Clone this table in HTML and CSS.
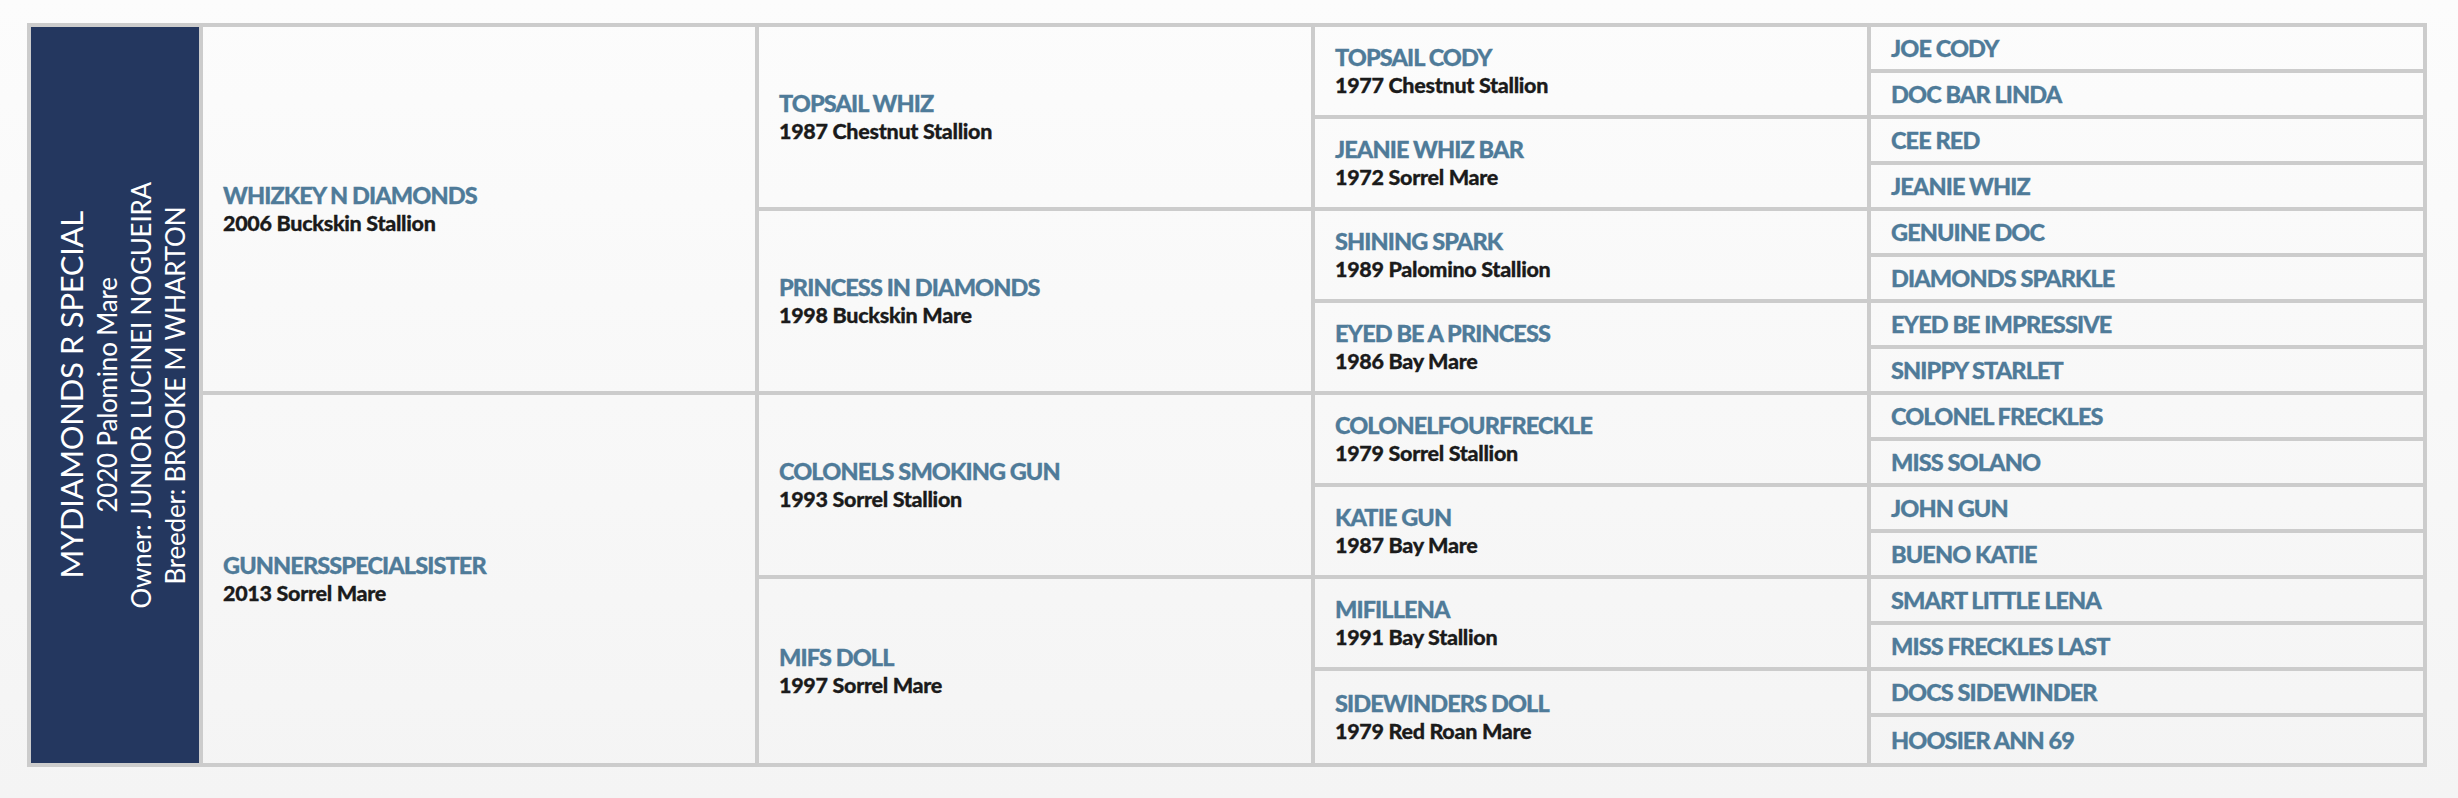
FILE: index.html
```html
<!DOCTYPE html>
<html lang="en">
<head>
<meta charset="utf-8">
<title>Pedigree - MYDIAMONDS R SPECIAL</title>
<link rel="stylesheet" href="styles.css">
</head>
<body>
<div class="pedigree">
  <div class="subject">
    <div class="subject-text">
      <div class="subject-name">MYDIAMONDS R SPECIAL</div>
      <div class="subject-line">2020 Palomino Mare</div>
      <div class="subject-line">Owner: JUNIOR LUCINEI NOGUEIRA</div>
      <div class="subject-line">Breeder: BROOKE M WHARTON</div>
    </div>
  </div>

  <div class="cell gen1"><div class="name">WHIZKEY N DIAMONDS</div><div class="info">2006 Buckskin Stallion</div></div>
  <div class="cell gen1"><div class="name">GUNNERSSPECIALSISTER</div><div class="info">2013 Sorrel Mare</div></div>

  <div class="cell gen2"><div class="name">TOPSAIL WHIZ</div><div class="info">1987 Chestnut Stallion</div></div>
  <div class="cell gen2"><div class="name">PRINCESS IN DIAMONDS</div><div class="info">1998 Buckskin Mare</div></div>
  <div class="cell gen2"><div class="name">COLONELS SMOKING GUN</div><div class="info">1993 Sorrel Stallion</div></div>
  <div class="cell gen2"><div class="name">MIFS DOLL</div><div class="info">1997 Sorrel Mare</div></div>

  <div class="cell gen3"><div class="name">TOPSAIL CODY</div><div class="info">1977 Chestnut Stallion</div></div>
  <div class="cell gen3"><div class="name">JEANIE WHIZ BAR</div><div class="info">1972 Sorrel Mare</div></div>
  <div class="cell gen3"><div class="name">SHINING SPARK</div><div class="info">1989 Palomino Stallion</div></div>
  <div class="cell gen3"><div class="name">EYED BE A PRINCESS</div><div class="info">1986 Bay Mare</div></div>
  <div class="cell gen3"><div class="name">COLONELFOURFRECKLE</div><div class="info">1979 Sorrel Stallion</div></div>
  <div class="cell gen3"><div class="name">KATIE GUN</div><div class="info">1987 Bay Mare</div></div>
  <div class="cell gen3"><div class="name">MIFILLENA</div><div class="info">1991 Bay Stallion</div></div>
  <div class="cell gen3"><div class="name">SIDEWINDERS DOLL</div><div class="info">1979 Red Roan Mare</div></div>

  <div class="cell gen4"><div class="name">JOE CODY</div></div>
  <div class="cell gen4"><div class="name">DOC BAR LINDA</div></div>
  <div class="cell gen4"><div class="name">CEE RED</div></div>
  <div class="cell gen4"><div class="name">JEANIE WHIZ</div></div>
  <div class="cell gen4"><div class="name">GENUINE DOC</div></div>
  <div class="cell gen4"><div class="name">DIAMONDS SPARKLE</div></div>
  <div class="cell gen4"><div class="name">EYED BE IMPRESSIVE</div></div>
  <div class="cell gen4"><div class="name">SNIPPY STARLET</div></div>
  <div class="cell gen4"><div class="name">COLONEL FRECKLES</div></div>
  <div class="cell gen4"><div class="name">MISS SOLANO</div></div>
  <div class="cell gen4"><div class="name">JOHN GUN</div></div>
  <div class="cell gen4"><div class="name">BUENO KATIE</div></div>
  <div class="cell gen4"><div class="name">SMART LITTLE LENA</div></div>
  <div class="cell gen4"><div class="name">MISS FRECKLES LAST</div></div>
  <div class="cell gen4"><div class="name">DOCS SIDEWINDER</div></div>
  <div class="cell gen4"><div class="name">HOOSIER ANN 69</div></div>
</div>
</body>
</html>
```
FILE: styles.css
```css
html {
  min-height: 100%;
  background: linear-gradient(#fcfcfc, #f4f4f4) fixed;
}

body {
  margin: 0;
  padding: 23px 31px 0 27px;
  font-family: Lato, "Liberation Sans", sans-serif;
}

.pedigree {
  display: grid;
  grid-auto-flow: column;
  grid-template-columns: 168px repeat(4, 1fr);
  grid-template-rows: repeat(15, 42px) 46px;
  gap: 4px;
  border: 4px solid #cccccc;
  background: #cccccc;
}

.subject {
  grid-row: span 16;
  background: #24375f;
  color: #ffffff;
  display: flex;
  align-items: center;
  justify-content: center;
  padding-left: 14px;
}

.subject-text {
  writing-mode: vertical-rl;
  transform: rotate(180deg);
  text-align: center;
  font-weight: 400;
}

.subject-name {
  font-size: 31px;
  line-height: 38px;
  letter-spacing: -0.3px;
}

.subject-line {
  font-size: 26px;
  line-height: 34px;
  letter-spacing: -0.2px;
}

.cell {
  background: linear-gradient(#fcfcfc, #f4f4f4) fixed;
  display: flex;
  flex-direction: column;
  justify-content: center;
  padding-left: 20px;
  min-width: 0;
}

.gen1 { grid-row: span 8; }
.gen2 { grid-row: span 4; }
.gen3 { grid-row: span 2; }
.gen4 { grid-row: span 1; }

.name {
  font-size: 23.5px;
  line-height: 28px;
  font-weight: 900;
  color: #4f7b99;
  letter-spacing: -0.9px;
  white-space: nowrap;
  -webkit-text-stroke: 0.3px #4f7b99;
}

.info {
  font-size: 21.5px;
  line-height: 28px;
  font-weight: 900;
  color: #1b1b1b;
  letter-spacing: -0.3px;
  white-space: nowrap;
  -webkit-text-stroke: 0.3px #1b1b1b;
}
```
